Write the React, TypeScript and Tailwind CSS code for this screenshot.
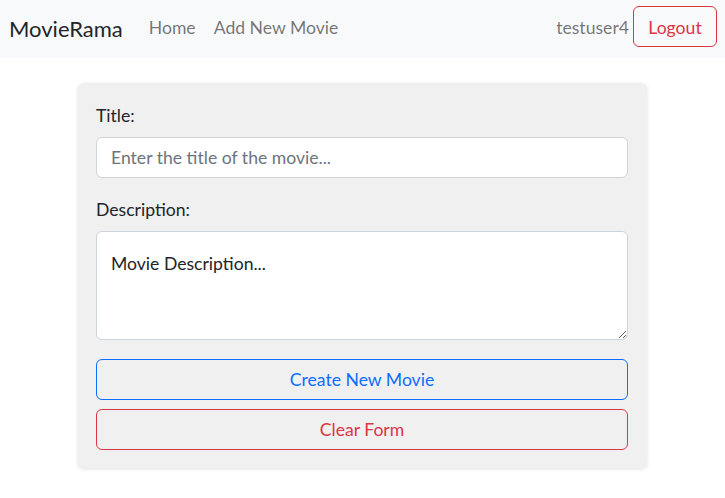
import { useState } from "react";

export default function App() {
  const [title, setTitle] = useState("");
  const [description, setDescription] = useState("Movie Description...");

  return (
    <div className="min-h-screen bg-white text-[#212529] font-['Lato','Noto_Sans',sans-serif] text-[17.6px] leading-[1.5]">
      <nav className="h-[58px] bg-[#f8f9fa] flex items-start pt-[6px] pl-[9px] pr-[8px]">
        <div className="h-[41px] flex items-center pt-[3px]">
          <span className="text-[22px] text-[#212529] mr-[26px]">MovieRama</span>
          <a className="text-[rgba(0,0,0,0.55)] mr-[18px]">Home</a>
          <a className="text-[rgba(0,0,0,0.55)]">Add New Movie</a>
        </div>
        <div className="ml-auto h-[41px] flex items-center gap-[4px]">
          <span className="text-[rgba(0,0,0,0.55)] pt-[3px]">testuser4</span>
          <button className="h-[41px] w-[84px] border border-[#dc3545] text-[#dc3545] rounded-[6px] pt-[3px]">
            Logout
          </button>
        </div>
      </nav>

      <div className="flex justify-center pt-[25px]">
        <form
          onSubmit={(e) => e.preventDefault()}
          className="w-[569px] bg-[#f0f0f0] rounded-[6px] shadow-[0_1px_4px_rgba(0,0,0,0.12)] pt-[20px] pb-[18px] pl-[18px] pr-[19px]"
        >
          <label className="block mb-[8px] leading-[26px]">Title:</label>
          <input
            type="text"
            value={title}
            onChange={(e) => setTitle(e.target.value)}
            placeholder="Enter the title of the movie..."
            className="block w-full h-[41px] bg-white border border-[#ced4da] rounded-[6px] px-[14px] placeholder:text-[#6c757d] outline-none"
          />
          <label className="block mt-[19px] mb-[8px] leading-[26px]">Description:</label>
          <textarea
            value={description}
            onChange={(e) => setDescription(e.target.value)}
            className="block w-full h-[109px] bg-white border border-[#ced4da] rounded-[6px] px-[14px] pt-[19px] outline-none resize-y"
          />
          <button
            type="submit"
            className="block w-full h-[41px] mt-[19px] border border-[#0d6efd] text-[#0d6efd] rounded-[6px] pt-[1px]"
          >
            Create New Movie
          </button>
          <button
            type="button"
            onClick={() => {
              setTitle("");
              setDescription("");
            }}
            className="block w-full h-[41px] mt-[9px] border border-[#dc3545] text-[#dc3545] rounded-[6px] pt-[1px]"
          >
            Clear Form
          </button>
        </form>
      </div>
    </div>
  );
}
